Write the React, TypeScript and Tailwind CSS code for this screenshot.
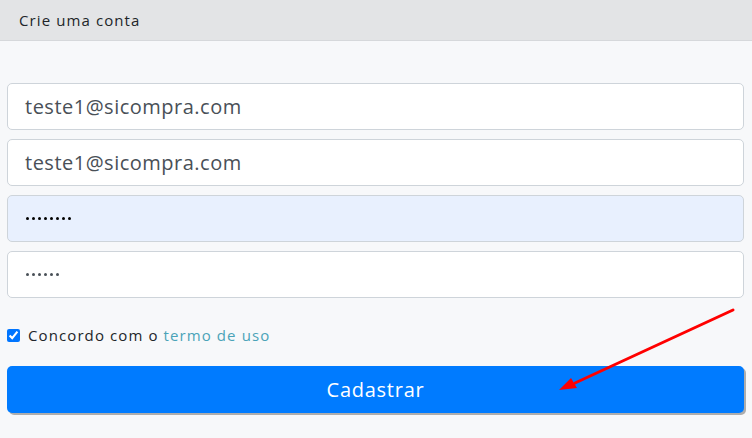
import React from "react";

export default function App() {
  const font = { fontFamily: '"Open Sans", "DejaVu Sans", sans-serif' };
  return (
    <div className="relative w-[752px] h-[438px] bg-[#f7f8fa] overflow-hidden" style={font}>
      <div className="h-[41px] bg-[#e3e4e6] border-b border-[#d6d8db] flex items-center pl-[19px]">
        <span className="text-[15px] text-[#212529] tracking-[1.1px]">Crie uma conta</span>
      </div>
      <div className="pl-[7px] pr-[8px] pt-[42px] flex flex-col gap-[9px]">
        <div className="h-[47px] bg-white border border-[#ced4da] rounded-[5px] flex items-center pl-[17px] text-[20px] text-[#495057] tracking-[0.5px]">teste1@sicompra.com</div>
        <div className="h-[47px] bg-white border border-[#ced4da] rounded-[5px] flex items-center pl-[17px] text-[20px] text-[#495057] tracking-[0.5px]">teste1@sicompra.com</div>
        <div className="h-[47px] bg-[#e8f0fe] border border-[#ced4da] rounded-[5px] flex items-center pl-[18px]">
          <span className="flex gap-[3px]">
            {Array.from({ length: 8 }).map((_, i) => (
              <span key={i} className="w-[3px] h-[3px] rounded-full bg-black" />
            ))}
          </span>
        </div>
        <div className="h-[47px] bg-white border border-[#ced4da] rounded-[5px] flex items-center pl-[18px]">
          <span className="flex gap-[3px]">
            {Array.from({ length: 6 }).map((_, i) => (
              <span key={i} className="w-[3px] h-[3px] rounded-full bg-[#495057]" />
            ))}
          </span>
        </div>
      </div>
      <div className="pl-[7px] mt-[29px] flex items-center gap-[8px] h-[16px]">
        <input type="checkbox" defaultChecked className="w-[13px] h-[13px] m-0 accent-[#0075ff]" />
        <span className="text-[15px] text-[#212529] tracking-[1.1px]">
          Concordo com o <span className="text-[#4aa3b8]">termo de uso</span>
        </span>
      </div>
      <div className="pl-[7px] pr-[8px] mt-[23px]">
        <button className="w-full h-[47px] bg-[#007bff] rounded-[5px] text-white text-[20px] tracking-[0.75px] shadow-[2px_2px_0_#adadad]">
          Cadastrar
        </button>
      </div>
      <svg className="absolute left-0 top-0 pointer-events-none" width="752" height="438">
        <line x1="733" y1="310" x2="575" y2="383" stroke="#ff0000" strokeWidth="3" strokeLinecap="round" />
        <polygon points="559,390 571,378 577,388" fill="#ff0000" />
      </svg>
    </div>
  );
}
